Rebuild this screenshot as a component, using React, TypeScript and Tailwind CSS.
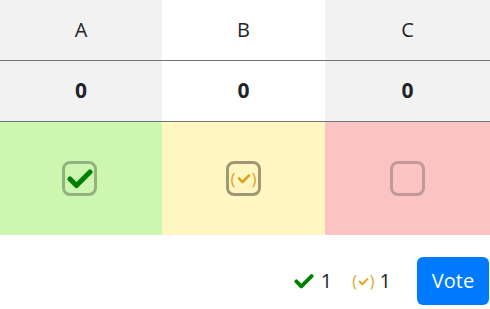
import React from 'react'

const font = { fontFamily: '"Open Sans", "Noto Sans", sans-serif' }

function Check({ w = 26, h = 21, color = '#008000', sw = 5 }: { w?: number; h?: number; color?: string; sw?: number }) {
  return (
    <svg width={w} height={h} viewBox="0 0 26 21" fill="none">
      <path d="M3 11l6.5 6.5L23 4" stroke={color} strokeWidth={sw} strokeLinecap="round" strokeLinejoin="round" />
    </svg>
  )
}

function Maybe({ size = 'text-[17px]', w = 14 }: { size?: string; w?: number }) {
  return (
    <span className={`flex items-center text-[#e0a526] ${size} leading-none`}>
      <span>(</span>
      <svg width={w} height="11" viewBox="0 0 14 11" fill="none" className="mx-[1px]">
        <path d="M2 5.5l3.5 3.5L12 2.5" stroke="#e0a526" strokeWidth="2.6" strokeLinecap="round" strokeLinejoin="round" />
      </svg>
      <span>)</span>
    </span>
  )
}

export default function App() {
  return (
    <div className="w-[490px] h-[309px] bg-white text-[#212529]" style={font}>
      <div className="grid grid-cols-[162px_163px_165px]">
        <div className="h-[61px] flex items-center justify-center text-[20px] bg-[#f2f2f2] border-b border-[#6c757d]">A</div>
        <div className="h-[61px] flex items-center justify-center text-[20px] bg-white border-b border-[#6c757d]">B</div>
        <div className="h-[61px] flex items-center justify-center text-[20px] bg-[#f2f2f2] border-b border-[#6c757d]">C</div>

        <div className="h-[61px] flex items-center justify-center text-[21px] font-bold bg-[#f2f2f2] border-b border-[#6c757d]">0</div>
        <div className="h-[61px] flex items-center justify-center text-[21px] font-bold bg-white border-b border-[#6c757d]">0</div>
        <div className="h-[61px] flex items-center justify-center text-[21px] font-bold bg-[#f2f2f2] border-b border-[#6c757d]">0</div>

        <div className="h-[113px] flex items-center justify-center bg-[#cdf7b1]">
          <div className="w-[35px] h-[35px] rounded-[8px] border-[3px] border-[rgba(0,0,0,0.28)] flex items-center justify-center mr-[3px]">
            <Check />
          </div>
        </div>
        <div className="h-[113px] flex items-center justify-center bg-[#fff6c1]">
          <div className="w-[35px] h-[35px] rounded-[8px] border-[3px] border-[rgba(0,0,0,0.38)] flex items-center justify-center">
            <Maybe />
          </div>
        </div>
        <div className="h-[113px] flex items-center justify-center bg-[#fcc3c3]">
          <div className="w-[35px] h-[35px] rounded-[8px] border-[3px] border-[rgba(0,0,0,0.22)]" />
        </div>
      </div>

      <div className="flex items-center justify-end pt-[22px] pr-[1px]">
        <div className="flex items-center gap-[7px] text-[20px]">
          <Check w={20} h={16} sw={5} />
          <span>1</span>
        </div>
        <div className="flex items-center gap-[5px] text-[20px] ml-[20px]">
          <Maybe size="text-[16px]" w={11} />
          <span>1</span>
        </div>
        <button className="ml-[26px] w-[72px] h-[48px] rounded-[6px] bg-[#007bff] text-white text-[20px]">Vote</button>
      </div>
    </div>
  )
}
